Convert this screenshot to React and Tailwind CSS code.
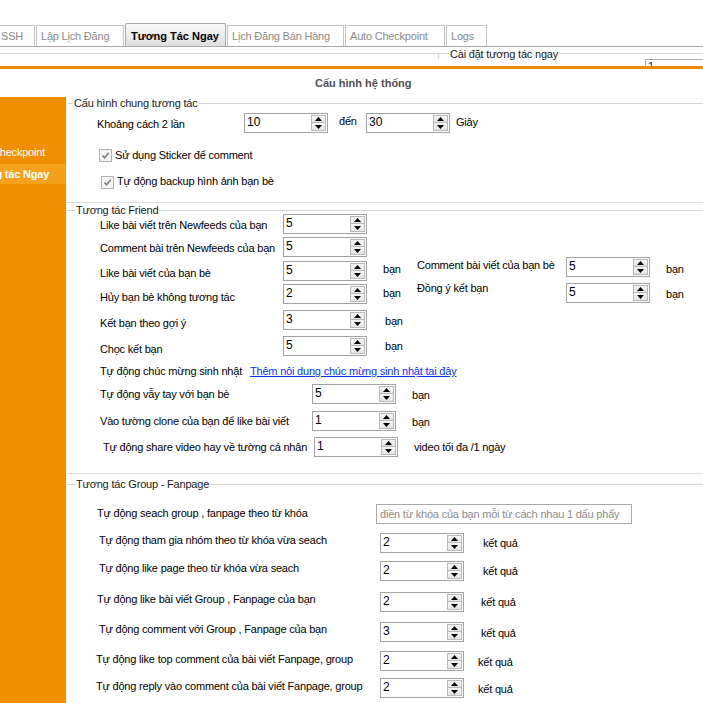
import React from "react";

const L = "shrink-0 whitespace-nowrap leading-[13px]";

function Spin({ value, className = "" }) {
  return (
    <div className={`flex h-[20px] w-[84px] shrink-0 border border-[#a2a2a2] bg-white ${className}`}>
      <div className="flex-1 pl-[2px] text-[12px] leading-[16px] tracking-normal text-black">{value}</div>
      <div className="my-px mr-px flex w-[15px] flex-col">
        <div className="flex h-1/2 items-center justify-center border border-[#b9b9b9] bg-gradient-to-b from-[#f7f7f7] to-[#e4e4e4]">
          <svg width="7" height="4" viewBox="0 0 7 4">
            <path d="M0 4 L3.5 0 L7 4 Z" fill="#000" />
          </svg>
        </div>
        <div className="flex h-1/2 items-center justify-center border border-t-0 border-[#b9b9b9] bg-gradient-to-b from-[#f7f7f7] to-[#e4e4e4]">
          <svg width="7" height="4" viewBox="0 0 7 4">
            <path d="M0 0 L7 0 L3.5 4 Z" fill="#000" />
          </svg>
        </div>
      </div>
    </div>
  );
}

function Check({ className = "" }) {
  return (
    <div className={`flex h-[13px] w-[13px] shrink-0 items-center justify-center border border-[#b3b3b3] bg-[#f4f4f4] ${className}`}>
      <svg width="9" height="9" viewBox="0 0 9 9">
        <path d="M1.5 4.5 L3.6 6.8 L7.6 1.8" fill="none" stroke="#777" strokeWidth="1.4" />
      </svg>
    </div>
  );
}

function GroupHead({ title, line }) {
  return (
    <div className="flex h-[7px] items-center">
      <div className={`h-0 shrink-0 border-t border-[#d6d6d6] ${line}`} />
      <span className="shrink-0 px-px leading-[13px] text-[#1a1a1a]">{title}</span>
      <div className="h-0 flex-1 border-t border-[#d6d6d6]" />
    </div>
  );
}

const tabBase = "shrink-0 border border-b-0 whitespace-nowrap leading-[13px]";

export default function App() {
  return (
    <div className="flex h-[703px] w-[703px] flex-col overflow-hidden bg-white font-['Liberation_Sans',Arial,sans-serif] text-[11px] tracking-[-0.2px] text-black">
      {/* top strip */}
      <div className="h-[23px] shrink-0" />

      {/* tabs */}
      <div className="flex h-[24px] shrink-0 items-end gap-px border-b border-[#a9a9a9]">
        <div className={`${tabBase} ml-[-10px] h-[21px] w-[45px] border-[#c4c4c4] pl-[10px] pt-[4px] text-[#8a8a8a]`}>SSH</div>
        <div className={`${tabBase} h-[21px] w-[88px] border-[#c4c4c4] pl-[4px] pt-[4px] text-[#8a8a8a]`}>Lập Lịch Đăng</div>
        <div className={`${tabBase} h-[23px] w-[101px] rounded-t-[2px] border-[#a8a8a8] bg-gradient-to-b from-[#fbfbfb] to-[#dedede] pl-[5px] pt-[6px] font-bold tracking-normal text-black`}>Tương Tác Ngay</div>
        <div className={`${tabBase} h-[21px] w-[117px] border-[#c4c4c4] pl-[4px] pt-[4px] text-[#8a8a8a]`}>Lịch Đăng Bán Hàng</div>
        <div className={`${tabBase} h-[21px] w-[100px] border-[#c4c4c4] pl-[4px] pt-[4px] text-[#8a8a8a]`}>Auto Checkpoint</div>
        <div className={`${tabBase} h-[21px] w-[41px] border-[#c4c4c4] pl-[4px] pt-[4px] text-[#8a8a8a]`}>Logs</div>
      </div>

      {/* panel behind */}
      <div className="flex h-[19px] shrink-0 overflow-hidden">
        <div className="mt-[6px] h-[6px] w-[439px] shrink-0 border-r border-t border-[#d6d6d6]" />
        <div className="mt-[6px] w-[10px] shrink-0 border-t border-[#d6d6d6]" />
        <div className="mt-px h-[12px] shrink-0 overflow-hidden px-px leading-[13px] text-[#1a1a1a]">Cài đặt tương tác ngay</div>
        <div className="mt-[6px] flex flex-1 border-t border-[#d6d6d6]">
          <div className="ml-auto mt-[5px] h-[12px] w-[58px] border-l border-t border-[#adadad] pl-[2px] text-[11px] leading-[13px] text-[#1a1a50]">1</div>
        </div>
      </div>

      <div className="h-[3px] shrink-0 bg-[#ea8a00]" />

      {/* header */}
      <div className="h-[28px] shrink-0 pl-[315px] pt-[8px] font-bold leading-[13px] tracking-normal text-[#505050]">Cấu hình hệ thống</div>

      <div className="flex flex-1">
        {/* sidebar */}
        <div className="w-[66px] shrink-0 overflow-hidden bg-[#ef8f00] pt-[46px] text-white">
          <div className="h-[21px] whitespace-nowrap pt-[3px] leading-[13px]">
            <span className="ml-[-8px] inline-block">Checkpoint</span>
          </div>
          <div className="h-[20px] whitespace-nowrap bg-[#f6a11b] pt-[4px] font-bold leading-[13px]">
            <span className="ml-[-33px] inline-block">Tương tác Ngay</span>
          </div>
        </div>

        {/* content */}
        <div className="flex flex-1 flex-col pt-[3px]">
          {/* group 1 */}
          <GroupHead title="Cấu hình chung tương tác" line="ml-[2px] w-[5px]" />
          <div className="mt-[6px] flex h-[36px] items-start pl-[31px]">
            <div className={`${L} mt-[5px] w-[147px]`}>Khoảng cách 2 lần</div>
            <Spin value="10" />
            <div className={`${L} ml-[11px] mt-[2px] w-[27px]`}>đến</div>
            <Spin value="30" />
            <div className={`${L} ml-[6px] mt-[3px]`}>Giây</div>
          </div>
          <div className="flex h-[26px] items-start pl-[33px]">
            <Check />
            <div className={`${L} ml-[3px]`}>Sử dụng Sticker để comment</div>
          </div>
          <div className="flex h-[27px] items-start pl-[35px]">
            <Check className="mt-px" />
            <div className={`${L} ml-[3px]`}>Tự động backup hình ảnh bạn bè</div>
          </div>
          <div className="h-px shrink-0 bg-[#dcdcdc]" />

          {/* group 2 */}
          <div className="mt-[4px]">
            <GroupHead title="Tương tác Friend" line="ml-px w-[8px]" />
          </div>
          <div className="flex h-[22px] items-start pl-[34px]">
            <div className={`${L} mt-[5px] w-[183px]`}>Like bài viết trên Newfeeds của bạn</div>
            <Spin value="5" />
          </div>
          <div className="flex h-[20px] items-start pl-[34px]">
            <div className={`${L} mt-[6px] w-[183px]`}>Comment bài trên Newfeeds của bạn</div>
            <Spin value="5" className="mt-px" />
          </div>
          <div className="flex h-[26px] items-start pl-[34px]">
            <div className={`${L} mt-[11px] w-[183px]`}>Like bài viết của bạn bè</div>
            <Spin value="5" className="mt-[5px]" />
            <div className={`${L} ml-[16px] mt-[7px] w-[34px]`}>bạn</div>
            <div className={`${L} mt-[3px] w-[149px]`}>Comment bài viết của bạn bè</div>
            <Spin value="5" className="mt-px" />
            <div className={`${L} ml-[16px] mt-[7px]`}>bạn</div>
          </div>
          <div className="flex h-[28px] items-start pl-[34px]">
            <div className={`${L} mt-[9px] w-[183px]`}>Hủy bạn bè không tương tác</div>
            <Spin value="2" className="mt-[2px]" />
            <div className={`${L} ml-[16px] mt-[5px] w-[34px]`}>bạn</div>
            <div className={`${L} w-[149px]`}>Đồng ý kết bạn</div>
            <Spin value="5" className="mt-px" />
            <div className={`${L} ml-[16px] mt-[6px]`}>bạn</div>
          </div>
          <div className="flex h-[26px] items-start pl-[34px]">
            <div className={`${L} mt-[7px] w-[183px]`}>Kết bạn theo gợi ý</div>
            <Spin value="3" />
            <div className={`${L} ml-[18px] mt-[5px]`}>bạn</div>
          </div>
          <div className="flex h-[29px] items-start pl-[34px]">
            <div className={`${L} mt-[7px] w-[183px]`}>Chọc kết bạn</div>
            <Spin value="5" />
            <div className={`${L} ml-[18px] mt-[4px]`}>bạn</div>
          </div>
          <div className="flex h-[19px] items-start pl-[34px]">
            <div className={`${L} w-[150px]`}>Tự động chúc mừng sinh nhật</div>
            <a href="#" className={`${L} text-[#0a35ff] underline`}>Thêm nôi dung chúc mừng sinh nhật tai đây</a>
          </div>
          <div className="flex h-[26px] items-start pl-[34px]">
            <div className={`${L} mt-[4px] w-[212px]`}>Tự động vẫy tay với bạn bè</div>
            <Spin value="5" />
            <div className={`${L} ml-[16px] mt-[5px]`}>bạn</div>
          </div>
          <div className="flex h-[26px] items-start pl-[34px]">
            <div className={`${L} mt-[5px] w-[212px]`}>Vào tường clone của bạn để like bài viết</div>
            <Spin value="1" className="mt-px" />
            <div className={`${L} ml-[16px] mt-[6px]`}>bạn</div>
          </div>
          <div className="flex h-[37px] items-start pl-[37px]">
            <div className={`${L} mt-[5px] w-[211px]`}>Tự động share video hay về tường cá nhân</div>
            <Spin value="1" className="mt-px" />
            <div className={`${L} ml-[16px] mt-[5px]`}>video tối đa /1 ngày</div>
          </div>
          <div className="h-px shrink-0 bg-[#dcdcdc]" />

          {/* group 3 */}
          <div className="mt-[7px]">
            <GroupHead title="Tương tác Group - Fanpage" line="ml-px w-[8px]" />
          </div>
          <div className="flex h-[44px] items-start pl-[31px]">
            <div className={`${L} mt-[19px] w-[279px]`}>Tự động seach group , fanpage theo từ khóa</div>
            <div className="mt-[16px] h-[20px] w-[256px] shrink-0 border border-[#a9a9a9] pl-[3px] pt-[3px] leading-[13px] whitespace-nowrap text-[#8c8c8c]">
              điền từ khóa của bạn mỗi từ cách nhau 1 dấu phẩy
            </div>
          </div>
          <div className="flex h-[28px] items-start pl-[33px]">
            <div className={`${L} mt-[2px] w-[281px]`}>Tự động tham gia nhóm theo từ khóa vừa seach</div>
            <Spin value="2" className="mt-px" />
            <div className={`${L} ml-[19px] mt-[5px]`}>kết quả</div>
          </div>
          <div className="flex h-[31px] items-start pl-[33px]">
            <div className={`${L} mt-[2px] w-[281px]`}>Tự động like page theo từ khóa vừa seach</div>
            <Spin value="2" className="mt-px" />
            <div className={`${L} ml-[19px] mt-[5px]`}>kết quả</div>
          </div>
          <div className="flex h-[30px] items-start pl-[31px]">
            <div className={`${L} mt-[2px] w-[283px]`}>Tự động like bài viết Group , Fanpage của bạn</div>
            <Spin value="2" className="mt-px" />
            <div className={`${L} ml-[17px] mt-[5px]`}>kết quả</div>
          </div>
          <div className="flex h-[30px] items-start pl-[33px]">
            <div className={`${L} mt-[2px] w-[281px]`}>Tự động comment với Group , Fanpage của bạn</div>
            <Spin value="3" className="mt-px" />
            <div className={`${L} ml-[17px] mt-[6px]`}>kết quả</div>
          </div>
          <div className="flex h-[27px] items-start pl-[30px]">
            <div className={`${L} mt-[2px] w-[284px]`}>Tự động like top comment của  bài viết Fanpage, group</div>
            <Spin value="2" />
            <div className={`${L} ml-[14px] mt-[5px]`}>kết quả</div>
          </div>
          <div className="flex h-[25px] items-start pl-[30px]">
            <div className={`${L} mt-[2px] w-[284px]`}>Tự động reply vào comment của bài viết Fanpage, group</div>
            <Spin value="2" />
            <div className={`${L} ml-[14px] mt-[5px]`}>kết quả</div>
          </div>
        </div>
      </div>
    </div>
  );
}
